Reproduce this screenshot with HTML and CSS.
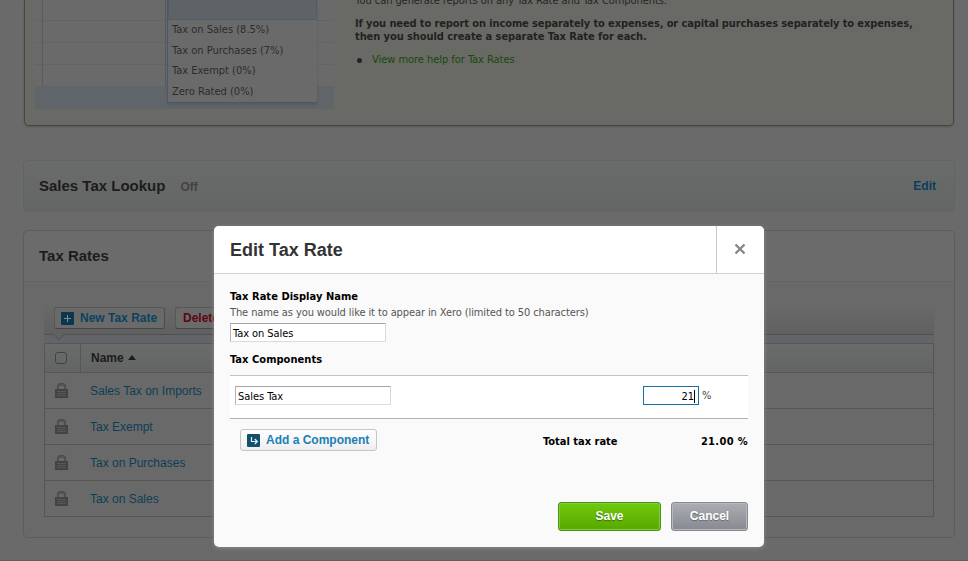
FILE: index.html
```
<!DOCTYPE html>
<html lang="en">
<head>
<meta charset="utf-8">
<title>Tax Rates</title>
<link rel="stylesheet" href="styles.css">
</head>
<body>
<svg class="defs" width="0" height="0">
  <symbol id="lock" viewBox="0 0 13 15">
    <path d="M2 6V2.500L4 0h5l2 2.500V6H9V3.500L8 2.500H5L4 3.500V6z" fill="#4a4a4a"/>
    <path d="M3.200 6V3L4.700 1.200h3.600L9.800 3v3" fill="none" stroke="#5c5c5c" stroke-width=".6"/>
    <path d="M0 6h13v9H0z" fill="#434343"/>
    <path d="M2 8.500h9M2 10.500h9M2 12.500h9" stroke="#575757"/>
  </symbol>
</svg>
<main class="page">
  <section class="help">
    <div class="shot">
      <div class="grid"><i class="c1"></i><i class="c2"></i></div>
      <ul class="drop">
        <li>Tax on Sales (8.5%)</li><li>Tax on Purchases (7%)</li><li>Tax Exempt (0%)</li><li>Zero Rated (0%)</li>
      </ul>
    </div>
    <div class="help-text">
      <p class="intro">You can generate reports on any Tax Rate and Tax Components.</p>
      <p class="strong"><span class="s1">If you need to report on income separately to expenses, or capital purchases separately to expenses,</span><br><span class="s2">then you should create a separate Tax Rate for each.</span></p>
      <p class="more"><i class="dot"></i><a>View more help for Tax Rates</a></p>
    </div>
  </section>
  <section class="lookup">
    <h2>Sales Tax Lookup</h2><span class="off">Off</span><a class="edit">Edit</a>
  </section>
  <section class="rates">
    <header><h2>Tax Rates</h2></header>
    <div class="toolbar">
      <span class="btn new"><svg width="13" height="13" viewBox="0 0 13 13"><rect width="13" height="13" rx="1" fill="#0b364b"/><path d="M6.500 3v7M3 6.500h7" stroke="#858c90"/></svg>New Tax Rate</span>
      <span class="btn del">Delete</span>
      <svg class="notch" width="12" height="7" viewBox="0 0 12 7"><path d="M0 0h12L6 5.500z" fill="#626262"/><path d="M.5 .5L6 5.500L11.500 .5" fill="none" stroke="#505050"/></svg>
    </div>
    <div class="table">
      <div class="row head"><span class="check"><i></i></span><span class="name">Name <svg width="8" height="5" viewBox="0 0 8 5"><path d="M0 5L4 0l4 5z" fill="#1b1b1b"/></svg></span></div>
      <div class="row"><svg class="lock"><use href="#lock"/></svg><a>Sales Tax on Imports</a></div>
      <div class="row"><svg class="lock"><use href="#lock"/></svg><a>Tax Exempt</a></div>
      <div class="row"><svg class="lock"><use href="#lock"/></svg><a>Tax on Purchases</a></div>
      <div class="row"><svg class="lock"><use href="#lock"/></svg><a>Tax on Sales</a></div>
    </div>
  </section>
</main>
<div class="modal">
  <header class="mhead"><h1>Edit Tax Rate</h1><span class="close"><svg width="12" height="12" viewBox="0 0 12 12"><path d="M1.500 1.500l9 9M10.500 1.500l-9 9" stroke="#878787" stroke-width="2.400"/></svg></span></header>
  <div class="mbody">
    <h3 class="l1">Tax Rate Display Name</h3>
    <p class="hint">The name as you would like it to appear in Xero (limited to 50 characters)</p>
    <div class="field f1">Tax on Sales</div>
    <h3 class="l2">Tax Components</h3>
    <div class="comp"><div class="field f2">Sales Tax</div><div class="field f3">21<i></i></div><span class="pct">%</span></div>
    <div class="total"><span class="add"><svg width="13" height="13" viewBox="0 0 13 13"><rect width="13" height="13" rx="1" fill="#12506f"/><path d="M4.500 3v4.500H10M7.800 5l2.500 2.500L7.800 10" fill="none" stroke="#e8f0f4" stroke-width="1.200"/></svg>Add a Component</span><b class="tl">Total tax rate</b><b class="tv">21.00 %</b></div>
    <footer><span class="act save">Save</span><span class="act cancel">Cancel</span></footer>
  </div>
</div>
</body>
</html>
```
FILE: styles.css
```
* { box-sizing: border-box; }
body { margin: 0; height: 561px; overflow: hidden; background: #6a6a6a; font: 11px/14px "DejaVu Sans Condensed", "DejaVu Sans", sans-serif; font-stretch: condensed; white-space: nowrap; }
h1, h2, h3, p, ul { margin: 0; padding: 0; }
.defs { position: absolute; }
.page { height: 561px; overflow: hidden; padding: 0 13px 0 23px; border-bottom: 1px solid #5e5e5e; }
h2, h1, .off, .edit, .btn, .row, .add, .act { font-family: "Liberation Sans", Arial, sans-serif; }
.help { display: flex; height: 126px; margin: 0 1px; width: 930px; padding-left: 10px; background: #696a65; border: 1px solid #454644; border-top: 0; border-radius: 0 0 5px 5px; box-shadow: 0 1px 2px #565656; }
.shot { width: 299px; height: 109px; background: #606569; position: relative; }
.grid { height: 86px; width: 299px; display: flex; background: repeating-linear-gradient(#6a6a6b 0 20px, #626466 20px 21px, #6a6a6b 21px 22px); }
.c1 { width: 8px; border-right: 1px solid #5a5b5d; }
.c2 { width: 123px; border-right: 1px solid #5a5b5d; }
.drop { position: absolute; left: 132px; top: 0; width: 150px; height: 103px; list-style: none; background: #6a6a6a; border-left: 1px solid #4a5a6c; border-bottom: 1px solid #45586c; box-shadow: 0 2px 2px #575c61; color: #2c2c2c; padding-left: 4px; }
.drop::before { content: ""; display: block; height: 19px; margin-left: -4px; background: #5e6368; border: 1px dotted #4e535d; border-top: 0; }
.drop li { height: 20.7px; line-height: 20px; }
.help-text { padding-left: 21px; color: #262626; }
.intro { height: 7px; line-height: 14px; margin-top: -6px; letter-spacing: -.07px; }
.strong { margin-top: 16px; font-weight: bold; line-height: 13px; color: #222; }
.s1 { letter-spacing: -.11px; }
.s2 { letter-spacing: -.08px; }
.more { display: flex; align-items: center; margin-top: 10px; color: #17490c; letter-spacing: -.04px; }
.dot { width: 5px; height: 5px; margin: 1px 10px 0 2px; border-radius: 50%; background: #222; }
.lookup { width: 932px; height: 52px; margin-top: 34px; padding: 0 18px 0 15px; display: flex; align-items: center; border: 1px solid #616467; border-radius: 5px; background: linear-gradient(#6a6b6b, #646666); }
h2 { font-size: 15px; line-height: 18px; color: #1c1c1c; }
.off { margin-left: 15px; font-weight: bold; font-size: 12px; color: #434343; padding-top: 2px; }
.edit { margin-left: auto; font-weight: bold; font-size: 12px; color: #0b3f5d; }
.rates { width: 932px; height: 308px; margin-top: 18px; border: 1px solid #5c5c5c; border-radius: 5px; background: #696969; padding: 0 20px; }
.rates header { height: 51px; margin: 0 -20px; padding: 16px 15px; border-bottom: 1px solid #656565; background: #6b6b6b; border-radius: 5px 5px 0 0; }
.toolbar { position: relative; height: 34px; margin-top: 19px; padding: 6px 10px; display: flex; gap: 10px; background: linear-gradient(#6a6a6a, #606060); border-bottom: 1px solid #505050; }
.btn { display: flex; align-items: center; height: 22px; border: 1px solid #575757; border-bottom-color: #454545; border-right-color: #4c4c4c; border-radius: 3px; background: #6a6a6a; font-weight: bold; font-size: 12px; color: #0b4261; }
.new { width: 111px; padding-left: 6px; gap: 6px; }
.del { width: 62px; padding-left: 7px; color: #5c0611; }
.notch { position: absolute; left: 9px; top: 33px; }
.table { border: 1px solid #565656; margin-top: 8px; box-shadow: 0 -9px 0 #636469; font-size: 12px; }
.row { display: flex; align-items: center; height: 36px; border-top: 1px solid #565656; font-size: 12px; color: #0d3e57; padding-left: 10px; }
.head { height: 28px; border: 0; font-weight: bold; color: #1c1c1c; background: linear-gradient(#6a6b6b, #636565); padding: 0; }
.check { width: 36px; height: 28px; border-right: 1px solid #565656; padding: 8px 10px; }
.check i { display: block; width: 12px; height: 12px; border: 1px solid #424242; border-radius: 3px; }
.name { padding-left: 10px; }
.name svg { margin: 0 0 2px 1px; }
.lock { width: 13px; height: 15px; margin-right: 22px; }
.modal { position: absolute; left: 214px; top: 226px; width: 550px; height: 321px; border-radius: 5px; background: #fafafa; box-shadow: 0 1px 4px #8b8b8b; overflow: hidden; }
.mhead { display: flex; justify-content: space-between; height: 48px; background: #fff; border-bottom: 1px solid #d0d1d2; padding-left: 16px; }
h1 { font-size: 18px; line-height: 48px; color: #333; }
.close { width: 48px; border-left: 1px solid #c8cacc; display: flex; align-items: center; justify-content: center; padding: 0 2px 2px 0; }
.mbody { padding: 16px 16px 0; color: #000; }
h3 { font-size: 11px; line-height: 14px; letter-spacing: .04px; }
.hint { color: #555; margin-top: 2px; letter-spacing: -.1px; }
.field { height: 19px; padding: 2px 2px 0; line-height: 16px; background: #fff; border: 1px solid #d8dae0; border-top-color: #a3a4a8; border-left-color: #b2b3b8; letter-spacing: -.06px; }
.f1 { width: 156px; margin-top: 3px; }
.l2 { margin-top: 11px; }
.comp { display: flex; height: 44px; margin-top: 8px; padding: 10px 5px; background: #fff; border-top: 1px solid #bfc1c2; border-bottom: 1px solid #a9b5bc; }
.f2 { width: 156px; }
.f3 { display: flex; justify-content: flex-end; width: 56px; margin-left: 252px; padding-right: 3px; border: 1px solid #176fa8; }
.f3 i { width: 1px; height: 13px; background: #000; margin: 1px 0 0; }
.pct { margin: 3px 0 0 3px; color: #444; }
.total { display: flex; height: 22px; margin-top: 10px; padding-left: 10px; line-height: 25px; }
.add { display: flex; align-items: center; gap: 6px; width: 137px; height: 22px; padding-left: 6px; border: 1px solid #c4c6c8; border-radius: 3px; background: linear-gradient(#fff, #eee); font-weight: bold; font-size: 12px; color: #1a80b7; }
.tl { margin-left: 166px; }
.tv { margin-left: auto; letter-spacing: .35px; }
footer { display: flex; justify-content: flex-end; gap: 10px; margin-top: 51px; }
.act { height: 29px; border-radius: 3px; text-align: center; line-height: 27px; font-weight: bold; font-size: 12px; color: #fff; }
.save { width: 103px; border: 1px solid #43960a; background: linear-gradient(#6fca0c, #58a800); box-shadow: inset 0 0 0 1px #83cc43; text-shadow: 0 1px 1px #327100; }
.cancel { width: 77px; border: 1px solid #858990; background: linear-gradient(#abadb3, #868a90); box-shadow: inset 0 0 0 1px #b6b9bd; text-shadow: 0 1px 1px #666; }
```
